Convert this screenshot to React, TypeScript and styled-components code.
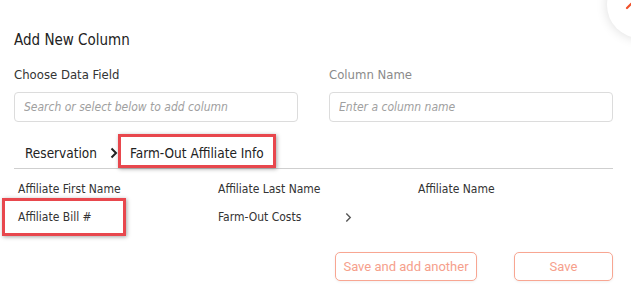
import React from "react";
import styled, { createGlobalStyle } from "styled-components";

const Global = createGlobalStyle`
  html, body { margin: 0; padding: 0; background: #fff; }
  body { font-family: "DejaVu Sans Condensed", "DejaVu Sans", sans-serif; overflow: hidden; }
  *, *::before, *::after { box-sizing: border-box; }
`;

const Dialog = styled.div`
  position: relative;
  width: 631px;
  height: 304px;
  padding: 29px 18px 0 14px;
  overflow: hidden;
  background: #fff;
`;

const CloseButton = styled.button`
  position: absolute;
  left: 607px;
  top: -28px;
  width: 66px;
  height: 66px;
  border-radius: 50%;
  border: none;
  background: #fff;
  box-shadow: 0 0 12px rgba(0, 0, 0, 0.14);
  padding: 0;
  cursor: pointer;
`;

const CloseIcon = styled.svg`
  position: absolute;
  left: 18px;
  top: 14px;
`;

const Title = styled.h2`
  margin: 0;
  font-size: 15px;
  font-weight: normal;
  line-height: 22px;
  color: #222;
`;

const FieldGrid = styled.div`
  display: grid;
  grid-template-columns: 284px 284px;
  column-gap: 31px;
  margin-top: 15px;
`;

const Field = styled.div`
  display: flex;
  flex-direction: column;
`;

const Label = styled.label<{ $muted?: boolean }>`
  font-size: 13px;
  line-height: 18px;
  color: ${(p) => (p.$muted ? "#8a8a8a" : "#333")};
  margin-bottom: 8px;
`;

const Input = styled.input`
  height: 30px;
  width: 100%;
  border: 1px solid #dcdcdc;
  border-radius: 4px;
  padding: 0 9px;
  font-family: "DejaVu Sans Condensed", "DejaVu Sans", sans-serif;
  font-size: 12px;
  color: #333;
  outline: none;
  &::placeholder {
    font-style: italic;
    color: #a0a0a0;
  }
`;

const Breadcrumb = styled.div`
  display: flex;
  align-items: stretch;
  height: 35px;
  margin-top: 12px;
  padding-left: 11px;
  border-bottom: 1px solid #cfcfcf;
  font-size: 13.5px;
  color: #222;
`;

const Crumb = styled.span<{ $highlight?: boolean }>`
  position: relative;
  display: flex;
  align-items: center;
  padding: 3px 0 0 ${(p) => (p.$highlight ? "12px" : "0")};
  ${(p) =>
    p.$highlight &&
    `
    &::after {
      content: "";
      position: absolute;
      left: 0;
      top: 0;
      width: 158px;
      height: 34px;
      border: 3px solid #e8474d;
      box-shadow: 1px 1px 4px rgba(0,0,0,0.35);
    }
  `}
`;

const Separator = styled.svg`
  align-self: center;
  margin: 3px 0 0 13px;
  flex-shrink: 0;
`;

const ItemGrid = styled.div`
  display: grid;
  grid-template-columns: 200px 200px 200px;
  grid-auto-rows: 28px;
  margin-top: 6px;
  padding-left: 4px;
`;

const Item = styled.div<{ $highlight?: boolean }>`
  position: relative;
  display: flex;
  align-items: center;
  width: 134px;
  font-size: 12px;
  color: #333;
  ${(p) =>
    p.$highlight &&
    `
    &::after {
      content: "";
      position: absolute;
      left: -16px;
      top: -5px;
      width: 124px;
      height: 38px;
      border: 3px solid #e8474d;
      box-shadow: 1px 1px 4px rgba(0,0,0,0.35);
    }
  `}
`;

const ItemChevron = styled.svg`
  margin-left: auto;
`;

const Actions = styled.div`
  display: flex;
  justify-content: flex-end;
  gap: 37px;
  margin-top: 21px;
`;

const Button = styled.button<{ $width: number }>`
  width: ${(p) => p.$width}px;
  height: 29px;
  border: 1px solid #f8a692;
  border-radius: 5px;
  background: #fff;
  color: #f6a08c;
  font-family: Roboto, "Liberation Sans", sans-serif;
  font-size: 13px;
  box-shadow: 0 1px 3px rgba(0, 0, 0, 0.06);
  cursor: pointer;
`;

export default function App() {
  return (
    <>
      <Global />
      <Dialog>
        <CloseButton aria-label="Close">
          <CloseIcon width="24" height="24" viewBox="0 0 24 24">
            <path d="M2 2 L22 22 M22 2 L2 22" stroke="#f0512b" strokeWidth="2.2" strokeLinecap="round" />
          </CloseIcon>
        </CloseButton>
        <Title>Add New Column</Title>
        <FieldGrid>
          <Field>
            <Label>Choose Data Field</Label>
            <Input placeholder="Search or select below to add column" />
          </Field>
          <Field>
            <Label $muted>Column Name</Label>
            <Input placeholder="Enter a column name" />
          </Field>
        </FieldGrid>
        <Breadcrumb>
          <Crumb>Reservation</Crumb>
          <Separator width="8" height="12" viewBox="0 0 8 12">
            <path d="M1.5 1.5 L6 6 L1.5 10.5" fill="none" stroke="#222" strokeWidth="2" />
          </Separator>
          <Crumb $highlight>Farm-Out Affiliate Info</Crumb>
        </Breadcrumb>
        <ItemGrid>
          <Item>Affiliate First Name</Item>
          <Item>Affiliate Last Name</Item>
          <Item>Affiliate Name</Item>
          <Item $highlight>Affiliate Bill #</Item>
          <Item>
            Farm-Out Costs
            <ItemChevron width="7" height="11" viewBox="0 0 8 12">
              <path d="M1.5 1.5 L6 6 L1.5 10.5" fill="none" stroke="#555" strokeWidth="1.6" />
            </ItemChevron>
          </Item>
        </ItemGrid>
        <Actions>
          <Button $width={142}>Save and add another</Button>
          <Button $width={99}>Save</Button>
        </Actions>
      </Dialog>
    </>
  );
}
